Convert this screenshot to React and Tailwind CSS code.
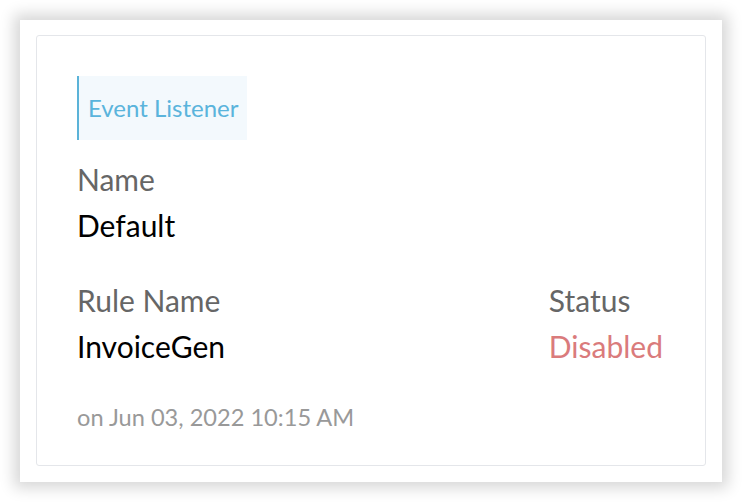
export default function App() {
  return (
    <div className="w-[742px] h-[502px] bg-white p-[20px]" style={{ fontFamily: "Lato, 'Noto Sans', sans-serif" }}>
      <div className="w-[702px] h-[462px] bg-white shadow-[0_0_14px_6px_rgba(0,0,0,0.16)] pt-[15px] pl-[16px]">
        <div className="w-[670px] h-[431px] border border-[#e4e6ea] rounded-[3px] pt-[40px] pl-[40px] pr-[42px]">
          <div className="flex items-center h-[64px] w-[170px] border-l-2 border-[#5bb3d8] bg-[#f3f9fd] pl-[9px] text-[24px] text-[#5ab4dc] whitespace-nowrap">
            Event Listener
          </div>
          <div className="mt-[16px] text-[30px] leading-[46px] text-[#666666]">Name</div>
          <div className="text-[30px] leading-[46px] text-black">Default</div>
          <div className="mt-[29px] flex justify-between">
            <div>
              <div className="text-[30px] leading-[46px] text-[#666666]">Rule Name</div>
              <div className="text-[30px] leading-[46px] text-black">InvoiceGen</div>
            </div>
            <div>
              <div className="text-[30px] leading-[46px] text-[#666666]">Status</div>
              <div className="text-[30px] leading-[46px] text-[#da7b7c]">Disabled</div>
            </div>
          </div>
          <div className="mt-[33px] text-[23.6px] leading-[30px] text-[#999999]">on Jun 03, 2022 10:15 AM</div>
        </div>
      </div>
    </div>
  );
}
